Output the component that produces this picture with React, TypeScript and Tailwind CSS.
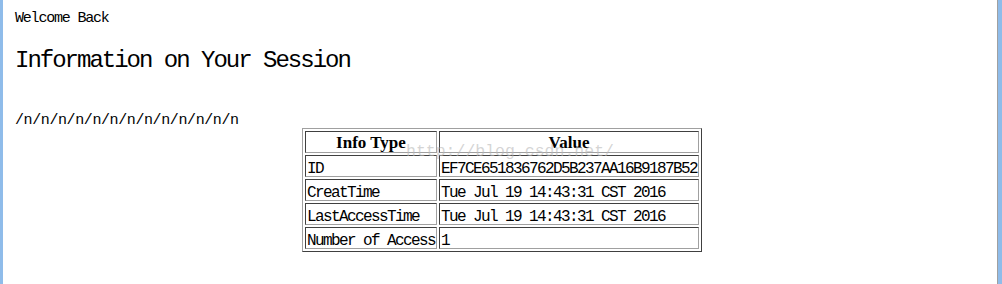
import React from 'react';

const rows: [string, string][] = [
  ['ID', 'EF7CE651836762D5B237AA16B9187B52'],
  ['CreatTime', 'Tue Jul 19 14:43:31 CST 2016'],
  ['LastAccessTime', 'Tue Jul 19 14:43:31 CST 2016'],
  ['Number of Access', '1'],
];

const cell =
  "border border-solid border-t-[#404040] border-l-[#404040] border-r-[#a0a0a0] border-b-[#a0a0a0] px-[1px] pt-[6px] pb-0 leading-[14px] text-[16px] tracking-[-1.6px] font-['Liberation_Mono',monospace] whitespace-nowrap text-left align-top";

const head =
  "border border-solid border-t-[#404040] border-l-[#404040] border-r-[#a0a0a0] border-b-[#a0a0a0] px-[1px] pt-[2px] pb-0 leading-[18px] text-[17px] font-bold font-['Liberation_Serif',serif] text-center whitespace-nowrap align-top";

export default function App() {
  return (
    <div className="relative h-[284px] w-[1002px] overflow-hidden bg-white border-l-[3px] border-l-[#8fbcea] border-r-[4px] border-r-[#8fbcea]">
      <div className="h-full border-r border-r-[#a0a0a0] text-black">
        <div className="pl-[12px] pt-[10px] font-['Liberation_Mono',monospace]">
          <p className="text-[15px] leading-[17px] tracking-[-1.2px]">Welcome Back</p>
          <h2 className="mt-[20px] text-[24px] leading-[28px] tracking-[-2px] font-normal">
            Information on Your Session
          </h2>
          <p className="mt-[39px] text-[15px] leading-[14px] tracking-[-0.4px]">
            /n/n/n/n/n/n/n/n/n/n/n/n/n
          </p>
        </div>

        <div className="flex justify-center pl-[4px]">
          <table className="border-separate border-spacing-[2px] border border-solid border-t-[#a0a0a0] border-l-[#a0a0a0] border-r-[#404040] border-b-[#404040]">
            <tbody>
              <tr>
                <th className={head}>Info Type</th>
                <th className={head}>Value</th>
              </tr>
              {rows.map(([k, v]) => (
                <tr key={k}>
                  <td className={cell}>{k}</td>
                  <td className={cell}>{v}</td>
                </tr>
              ))}
            </tbody>
          </table>
        </div>
      </div>

      <span className="pointer-events-none absolute left-[403px] top-[144px] text-[16.5px] leading-none text-[#b8b8b8]/60 font-['Liberation_Mono',monospace] whitespace-nowrap">
        http://blog.csdn.net/
      </span>
    </div>
  );
}
